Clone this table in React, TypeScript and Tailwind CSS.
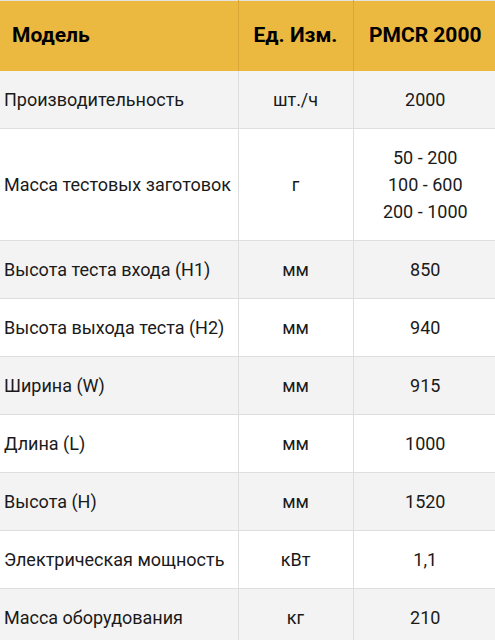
import React from "react";

const rows: [string, string, string[]][] = [
  ["Производительность", "шт./ч", ["2000"]],
  ["Масса тестовых заготовок", "г", ["50 - 200", "100 - 600", "200 - 1000"]],
  ["Высота теста входа (H1)", "мм", ["850"]],
  ["Высота выхода теста (H2)", "мм", ["940"]],
  ["Ширина (W)", "мм", ["915"]],
  ["Длина (L)", "мм", ["1000"]],
  ["Высота (H)", "мм", ["1520"]],
  ["Электрическая мощность", "кВт", ["1,1"]],
  ["Масса оборудования", "кг", ["210"]],
];

export default function App() {
  return (
    <div className="w-[495px] h-[640px] overflow-hidden bg-white" style={{ fontFamily: "Roboto, 'Noto Sans', sans-serif" }}>
      <table className="w-[497px] border-collapse table-fixed border-t border-[#e3e3e3]">
        <colgroup>
          <col className="w-[238px]" />
          <col className="w-[115px]" />
          <col className="w-[144px]" />
        </colgroup>
        <thead>
          <tr className="bg-[#ecb940] h-[70px] text-[21px] font-bold text-black">
            <th className="text-left pl-[12px] border-r border-[#dba636]">Модель</th>
            <th className="text-center border-r border-[#dba636]">Ед. Изм.</th>
            <th className="text-center">PMCR 2000</th>
          </tr>
        </thead>
        <tbody className="text-[18px] leading-[27px] text-[#1a1a1a]">
          {rows.map(([name, unit, vals], i) => (
            <tr key={i} className={i % 2 === 0 ? "bg-[#f3f3f3]" : "bg-white"}>
              <td className="border-b border-r border-[#dedede] pl-[4px] py-[15px] align-middle">{name}</td>
              <td className="border-b border-r border-[#dedede] text-center py-[15px] align-middle">{unit}</td>
              <td className="border-b border-[#dedede] text-center py-[15px] align-middle">
                {vals.map((v) => (
                  <div key={v}>{v}</div>
                ))}
              </td>
            </tr>
          ))}
        </tbody>
      </table>
    </div>
  );
}
